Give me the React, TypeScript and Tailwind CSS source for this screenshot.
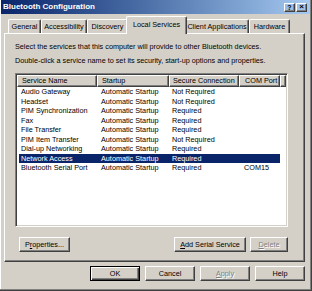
const raised =
  "border border-t-white border-l-white border-r-[#404040] border-b-[#404040] shadow-[inset_-1px_-1px_0_#808080]";

const tabs = [
  { label: "General", w: "w-[33px]" },
  { label: "Accessibility", w: "w-[46px]" },
  { label: "Discovery", w: "w-[41px]" },
  { label: "Local Services", w: "w-[61px]", active: true },
  { label: "Client Applications", w: "w-[64px]" },
  { label: "Hardware", w: "w-[41px]" },
];

const rows = [
  ["Audio Gateway", "Automatic Startup", "Not Required", ""],
  ["Headset", "Automatic Startup", "Not Required", ""],
  ["PIM Synchronization", "Automatic Startup", "Required", ""],
  ["Fax", "Automatic Startup", "Required", ""],
  ["File Transfer", "Automatic Startup", "Required", ""],
  ["PIM Item Transfer", "Automatic Startup", "Not Required", ""],
  ["Dial-up Networking", "Automatic Startup", "Required", ""],
  ["Network Access", "Automatic Startup", "Required", ""],
  ["Bluetooth Serial Port", "Automatic Startup", "Required", "COM15"],
];

const cols = [
  { name: "Service Name", w: "w-[80px]", hp: "pl-[4px]" },
  { name: "Startup", w: "w-[72px]", hp: "pl-[4px]" },
  { name: "Secure Connection", w: "w-[70px]", hp: "pl-[3px]" },
  { name: "COM Port", w: "w-[41px]", hp: "pl-[5px]" },
];

function Btn({
  children,
  w,
  disabled,
  def,
}: {
  children: React.ReactNode;
  w: string;
  disabled?: boolean;
  def?: boolean;
}) {
  const frame = def
    ? "border border-black shadow-[inset_1px_1px_0_#fff,inset_-1px_-1px_0_#404040,inset_-2px_-2px_0_#808080]"
    : raised;
  return (
    <div
      className={`${w} h-[15px] ${frame} flex items-center justify-center ${
        disabled ? "text-[#808080] [text-shadow:1px_1px_0_#fff]" : "text-black"
      }`}
    >
      {children}
    </div>
  );
}

export default function App() {
  return (
    <div className="w-[312px] h-[291px] bg-[#d4d0c8] border-r border-b border-r-[#404040] border-b-[#404040] shadow-[inset_-1px_-1px_0_#808080,inset_1px_0_0_#fff] flex flex-col text-[7.25px] leading-none font-['Liberation_Sans',Arial,sans-serif] overflow-hidden select-none">
      {/* title bar */}
      <div className="h-[14px] mx-[1px] flex items-center justify-between bg-gradient-to-r from-[#0a246a] to-[#a6caf0] pl-[2px] pr-[3px]">
        <span className="text-white font-bold text-[8px]">Bluetooth Configuration</span>
        <div className="flex items-center">
          <div className={`w-[11px] h-[9px] ${raised} flex items-center justify-center text-[7px] font-bold text-black`}>
            ?
          </div>
          <div className={`w-[11px] h-[9px] ml-[1px] ${raised} flex items-center justify-center text-[8px] font-bold text-black`}>
            ×
          </div>
        </div>
      </div>

      {/* tabs */}
      <div className="flex items-end h-[18px] mt-[2px] pl-[8px] -mb-px">
        {tabs.map((t) =>
          t.active ? (
            <div
              key={t.label}
              className={`${t.w} -mx-[2px] h-[18px] relative z-10 bg-[#d4d0c8] border-t border-l border-r border-t-white border-l-white border-r-[#404040] shadow-[inset_-1px_0_0_#808080] rounded-t-[2px] flex items-center justify-center pb-[2px] text-black whitespace-nowrap`}
            >
              {t.label}
            </div>
          ) : (
            <div
              key={t.label}
              className={`${t.w} h-[14px] mb-px border-t border-l border-r border-t-white border-l-white border-r-[#404040] shadow-[inset_-1px_0_0_#808080] rounded-t-[2px] flex items-center justify-center text-black whitespace-nowrap`}
            >
              {t.label}
            </div>
          )
        )}
      </div>

      {/* panel */}
      <div className={`ml-[4px] w-[301px] h-[229px] ${raised} pl-[10px] pt-[6px] flex flex-col text-black`}>
        <div className="leading-[14px] whitespace-nowrap">
          Select the services that this computer will provide to other Bluetooth devices.
        </div>
        <div className="leading-[14px] whitespace-nowrap">
          Double-click a service name to set its security, start-up options and properties.
        </div>

        {/* list view */}
        <div className="mt-[5px] w-[273px] h-[154px] bg-white border border-t-[#808080] border-l-[#808080] border-r-white border-b-white shadow-[inset_1px_1px_0_#404040,inset_-1px_-1px_0_#d4d0c8] p-[1px] flex flex-col">
          <div className="flex h-[12px] shrink-0">
            {cols.map((c) => (
              <div
                key={c.name}
                className={`${c.w} h-full bg-[#d4d0c8] ${raised} ${c.hp} flex items-center whitespace-nowrap`}
              >
                {c.name}
              </div>
            ))}
            <div className={`flex-1 h-full bg-[#d4d0c8] ${raised}`} />
          </div>
          <div className="flex flex-col">
            {rows.map((r) => {
              const sel = r[0] === "Network Access";
              return (
                <div
                  key={r[0]}
                  className={`flex h-[9.5px] items-center ml-[2px] w-[261px] ${
                    sel ? "bg-[#0a246a] text-white" : "text-black"
                  }`}
                >
                  <div className="w-[78px] pl-[2px] whitespace-nowrap">{r[0]}</div>
                  <div className="w-[72px] pl-[4px] whitespace-nowrap">{r[1]}</div>
                  <div className="w-[70px] pl-[3px] whitespace-nowrap">{r[2]}</div>
                  <div className="w-[41px] pl-[5px] whitespace-nowrap">{r[3]}</div>
                </div>
              );
            })}
          </div>
        </div>

        {/* panel buttons */}
        <div className="flex mt-[10px] pr-[16px]">
          <div className="ml-[4px]">
            <Btn w="w-[51px]">
              P<span className="underline">r</span>operties...
            </Btn>
          </div>
          <div className="ml-auto flex gap-[4px]">
            <Btn w="w-[72px]">
              <span className="underline">A</span>dd Serial Service
            </Btn>
            <Btn w="w-[38px]" disabled>
              <span className="underline">D</span>elete
            </Btn>
          </div>
        </div>
      </div>

      {/* dialog buttons */}
      <div className="flex justify-end gap-[5px] mt-[4px] pr-[6px]">
        <Btn w="w-[50px]" def>
          OK
        </Btn>
        <Btn w="w-[50px]">Cancel</Btn>
        <Btn w="w-[50px]" disabled>
          <span className="underline">A</span>pply
        </Btn>
        <Btn w="w-[50px]">Help</Btn>
      </div>
    </div>
  );
}
